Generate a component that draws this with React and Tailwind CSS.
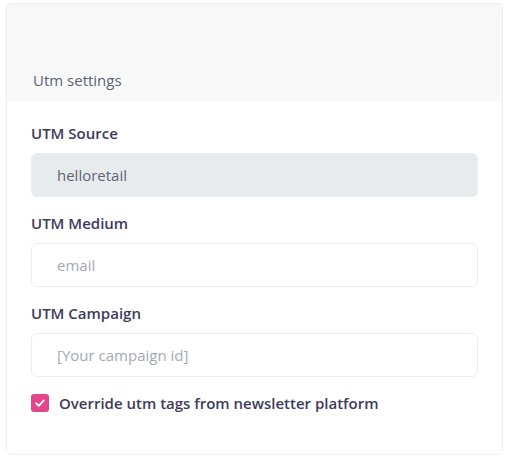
import React, { useState } from 'react';

const FIELDS = [
  { label: 'UTM Source', value: 'helloretail', disabled: true },
  { label: 'UTM Medium', placeholder: 'email' },
  { label: 'UTM Campaign', placeholder: '[Your campaign id]' },
];

function Field({ label, value, placeholder, disabled }) {
  return (
    <div>
      <label className="block h-[20px] text-[15px] leading-[20px] font-semibold text-[#3e3a5a]">{label}</label>
      <input
        className={
          'mt-[10px] block h-[44px] w-full rounded-[6px] border border-[#ebebf5] px-[25px] text-[15px] outline-none placeholder:text-[#a4a9b3] ' +
          (disabled ? 'bg-[#e8ebee] text-[#5f6570]' : 'bg-white text-[#5f6570]')
        }
        defaultValue={value}
        placeholder={placeholder}
        disabled={disabled}
      />
    </div>
  );
}

export default function App() {
  const [override, setOverride] = useState(true);

  return (
    <div className="h-[460px] w-[510px] overflow-hidden bg-white pt-[3px] pl-[6px] font-['Open_Sans',sans-serif]">
      <div className="w-[497px] overflow-hidden rounded-[5px] border border-[#ededf7]">
        {/* header */}
        <div className="flex h-[97px] items-end bg-[#f8f8f9] px-[26px] pb-[11px]">
          <span className="text-[15px] leading-[20px] text-[#5b6372]">Utm settings</span>
        </div>

        {/* body */}
        <div className="flex h-[353px] flex-col gap-[16px] bg-white px-[24px] pt-[22px]">
          {FIELDS.map((f) => (
            <Field key={f.label} {...f} />
          ))}
          <label className="flex h-[20px] items-center gap-[10px]">
            <span
              onClick={() => setOverride(!override)}
              className={
                'flex h-[18px] w-[18px] items-center justify-center rounded-[3px] ' +
                (override ? 'bg-[#e5458a]' : 'border border-gray-300 bg-white')
              }
            >
              {override && (
                <svg width="12" height="12" viewBox="0 0 12 12" fill="none">
                  <path d="M2.2 6.3 L4.8 8.8 L9.8 3.4" stroke="white" strokeWidth="1.8" strokeLinecap="round" strokeLinejoin="round" />
                </svg>
              )}
            </span>
            <span className="text-[15px] leading-[20px] font-semibold text-[#3e3a5a]">Override utm tags from newsletter platform</span>
          </label>
        </div>
      </div>
      <div className="mt-[5px] h-[20px] w-[497px] rounded-t-[5px] border border-[#ededf7]" />
    </div>
  );
}
